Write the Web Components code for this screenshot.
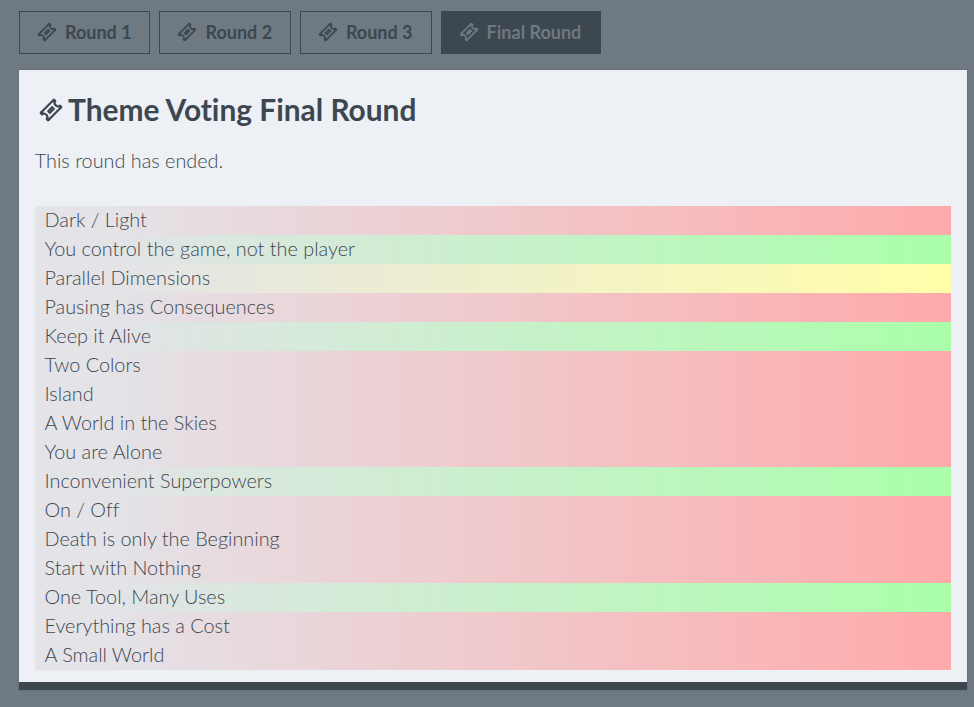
<!DOCTYPE html>
<html lang="en"><head><meta charset="utf-8"><title>Theme Voting</title>
<style>
html{background:#6e7982}
body{margin:0;font-family:Lato,sans-serif;color:#3d4750;font-variant-ligatures:none}
</style></head><body>
<vote-page></vote-page>
<script>
const define=(name,html,setup)=>customElements.define(name,class extends HTMLElement{
  connectedCallback(){
    if(this.shadowRoot)return;
    this.attachShadow({mode:'open'}).innerHTML=html;
    if(setup)setup(this.shadowRoot,this);
  }
});
define('ticket-icon',`<style>:host{display:block;width:var(--icon,18px);height:var(--icon,18px);flex:none}svg{display:block;width:100%;height:100%;overflow:visible}</style>
<svg viewBox="-2 -2 36 36" fill="none" stroke="currentColor" stroke-width="3.6" stroke-linejoin="round" stroke-linecap="round"><g transform="rotate(-45 16 16)"><path d="M1.6 7.4H30.4V10.4C25.6 12.4 25.6 19.6 30.4 21.6V24.6H1.6V21.6C6.4 19.6 6.4 12.4 1.6 10.4Z"/><path d="M1.4 8.2V10M30.6 8.2V10M1.4 22V23.8M30.6 22V23.8" stroke-width="5.4"/><rect x="11.2" y="13.8" width="9.6" height="4.4" stroke-width="2.8" fill="currentColor" fill-opacity=".8"/></g></svg>`);
define('round-tab',`<style>:host{display:flex;box-sizing:border-box;height:43px;width:var(--w,131.4px);border:1px solid #3d4750;padding:0 0 2px 18px;align-items:center;gap:9px;font-size:18px;line-height:22px;font-weight:700;white-space:nowrap}:host([active]){background:#3d4750;color:#6e7982}</style><ticket-icon></ticket-icon><span><slot></slot></span>`);
define('round-tabs',`<style>:host{display:flex;gap:9.05px;height:43px}</style><slot></slot>`);
define('theme-row',`<style>:host{display:block;height:29px;line-height:27px;padding-left:9.5px;box-sizing:border-box;background:linear-gradient(90deg,#e3e3e8,#e3e3e8 8%,var(--end,#faa))}:host([vote=yes]){--end:#afa}:host([vote=maybe]){--end:#ffa}</style><slot></slot>`);
define('theme-panel',`<style>:host{display:block;box-sizing:border-box;height:620px;margin-top:16px;padding:22px 16px 0;background:#edf0f5;border-bottom:8px solid #3d4750;box-shadow:0 0 2px #0003;font-size:19.83px;font-weight:300}
h1{display:flex;align-items:center;gap:6px;margin:0;padding:0 0 0 5px;height:36px;font-size:29.87px;line-height:36px;font-weight:700;--icon:22px}h1 span{margin-top:-1px}p{margin:19px 0 31px -.3px;height:28px;line-height:26px}</style>
<h1><ticket-icon></ticket-icon><span><slot name="title"></slot></span></h1><p><slot name="status"></slot></p><slot></slot>`);
define('vote-page',`<style>:host{display:block;box-sizing:border-box;height:707px;padding:11px 7px 0 19px}</style>
<round-tabs><round-tab>Round 1</round-tab><round-tab>Round 2</round-tab><round-tab style="--w:131.7px">Round 3</round-tab><round-tab active style="--w:160px">Final Round</round-tab></round-tabs>
<theme-panel><span slot="title">Theme Voting Final Round</span><span slot="status">This round has ended.</span></theme-panel>`,root=>{
  const panel=root.querySelector('theme-panel');
  [['Dark / Light'],['You control the game, not the player','yes'],['Parallel Dimensions','maybe'],['Pausing has Consequences'],['Keep it Alive','yes'],['Two Colors'],['Island'],['A World in the Skies'],['You are Alone'],['Inconvenient Superpowers','yes'],['On / Off'],['Death is only the Beginning'],['Start with Nothing'],['One Tool, Many Uses','yes'],['Everything has a Cost'],['A Small World']].forEach(([text,vote])=>{
    const row=document.createElement('theme-row');
    row.textContent=text;
    if(vote)row.setAttribute('vote',vote);
    panel.append(row);
  });
});
</script></body></html>
